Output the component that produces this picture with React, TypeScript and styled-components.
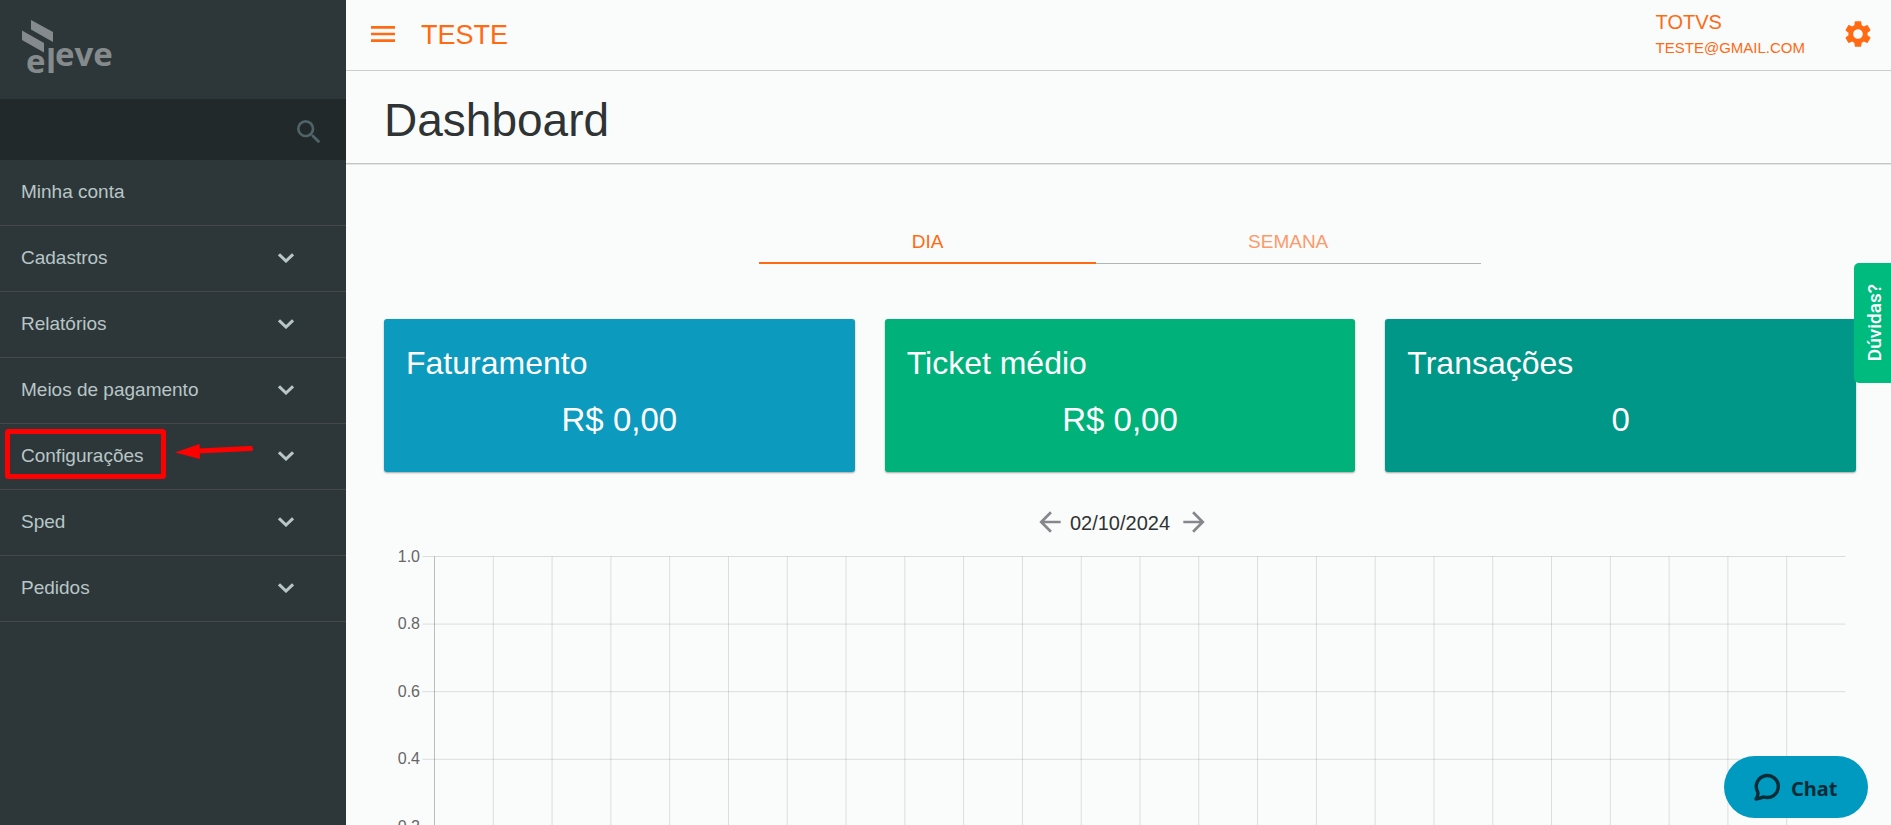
import React from "react";
import styled, { createGlobalStyle } from "styled-components";
import {
  MdArrowBack,
  MdArrowForward,
  MdMenu,
  MdSearch,
  MdSettings,
} from "react-icons/md";

const GlobalStyle = createGlobalStyle`
  *, *::before, *::after { box-sizing: border-box; }
  body {
    margin: 0;
    background: #fafcfc;
    color: #303333;
    font-family: "Liberation Sans", Arial, sans-serif;
  }
  button { font: inherit; border: 0; background: none; padding: 0; cursor: pointer; }
  svg { display: block; }
`;

const Shell = styled.div`
  position: relative;
  display: flex;
  height: 100vh;
  overflow: hidden;
`;

const Sidebar = styled.aside`
  flex: 0 0 346px;
  background: #2d3739;
`;

const LogoArea = styled.div`
  height: 99px;
`;

const LogoText = styled.text`
  font: 700 33px "Open Sans", "Noto Sans", sans-serif;
`;

const SearchBar = styled.form`
  display: flex;
  align-items: center;
  height: 61px;
  padding: 5px 21px 0;
  background: #22292b;
`;

const SearchInput = styled.input`
  flex: 1;
  min-width: 0;
  border: 0;
  outline: 0;
  background: transparent;
  color: #b8c6c7;
  font: 19px "Liberation Sans", Arial, sans-serif;
`;

const SearchButton = styled.button`
  color: #4f6468;
`;

const MenuList = styled.ul`
  list-style: none;
  margin: 0;
  padding: 0;
`;

const MenuRow = styled.li`
  position: relative;
  border-bottom: 1px solid #454849;
`;

const MenuButton = styled.button`
  display: flex;
  align-items: center;
  justify-content: space-between;
  width: 100%;
  height: 65px;
  padding: 0 52px 1px 21px;
  color: #b8c6c7;
  font-size: 19px;
  line-height: 24px;
  text-align: left;
`;

const Highlight = styled.svg`
  position: absolute;
  left: 5px;
  top: 5px;
  pointer-events: none;
`;

const Main = styled.main`
  flex: 1;
  min-width: 0;
`;

const TopBar = styled.header`
  display: flex;
  align-items: center;
  height: 71px;
  padding: 0 17px 0 21px;
  border-bottom: 1px solid #cccece;
  color: #ff6a13;
`;

const IconButton = styled.button`
  color: inherit;
  padding-bottom: 2px;
`;

const Company = styled.span`
  flex: 1;
  margin-left: 22px;
  padding-bottom: 1px;
  font-size: 27px;
  line-height: 32px;
`;

const User = styled.div`
  display: flex;
  flex-direction: column;
  margin-right: 37px;
`;

const UserName = styled.span`
  font-size: 20px;
  line-height: 25px;
`;

const UserMail = styled.span`
  font-size: 15px;
  line-height: 25px;
`;

const TitleBar = styled.div`
  padding: 23px 38px 17px;
  border-bottom: 1px solid #c4c6c6;
  box-shadow: 0 1px 0 #e4e6e6;
`;

const Title = styled.h1`
  margin: 0;
  font-size: 46px;
  font-weight: 400;
  line-height: 52px;
`;

const Content = styled.div`
  padding: 67px 35px 0 38px;
`;

const Tabs = styled.div`
  display: flex;
  width: 49%;
  margin: 0 auto;
  line-height: 22px;
`;

const Tab = styled.button<{ $active?: boolean }>`
  flex: 1 1 auto;
  height: 33px;
  padding-bottom: ${(p) => (p.$active ? "9px" : "10px")};
  border-bottom: ${(p) => (p.$active ? "2px solid #ff6a13" : "1px solid #b0b6b6")};
  color: ${(p) => (p.$active ? "#ff6a13" : "#fb9a6a")};
  font-size: 19px;
`;

const Cards = styled.section`
  display: grid;
  grid-template-columns: repeat(3, 1fr);
  gap: 30px;
  margin-top: 55px;
`;

const Card = styled.article<{ $color: string }>`
  padding: 24px 22px 32px;
  border-radius: 3px;
  background: ${(p) => p.$color};
  box-shadow: 0 1px 2px rgba(0, 0, 0, 0.35);
  color: #fff;
`;

const CardTitle = styled.h2`
  margin: 0 0 17px;
  font-size: 32px;
  font-weight: 400;
  line-height: 40px;
`;

const CardValue = styled.p`
  margin: 0;
  font-size: 33px;
  line-height: 40px;
  text-align: center;
`;

const DateNav = styled.div`
  display: flex;
  align-items: center;
  justify-content: center;
  gap: 4px;
  height: 32px;
  margin-top: 34px;
  padding-left: 4px;
`;

const DateText = styled.time`
  padding: 3px 4px 0 0;
  font-size: 20px;
`;

const DateButton = styled.button`
  color: #86878b;
`;

const Plot = styled.svg`
  width: calc(100% - 61px);
  height: 338px;
  margin: 18px 11px 0 50px;
  overflow: visible;
`;

const AxisLabel = styled.text`
  fill: #666;
  font-size: 16px;
`;

const HelpTab = styled.button`
  position: absolute;
  right: 0;
  top: 263px;
  display: flex;
  align-items: center;
  justify-content: center;
  width: 37px;
  height: 120px;
  padding-left: 3px;
  border-radius: 5px 0 0 5px;
  background: #00bb7e;
  color: #fff;
`;

const HelpLabel = styled.span`
  writing-mode: vertical-rl;
  transform: rotate(180deg);
  font: 500 19px Roboto, sans-serif;
`;

const ChatButton = styled.button`
  position: absolute;
  right: 23px;
  bottom: 7px;
  display: flex;
  align-items: center;
  gap: 10px;
  width: 144px;
  height: 62px;
  padding-left: 29px;
  border-radius: 31px;
  background: #0099bf;
  color: #0b2c36;
`;

const ChatLabel = styled.span`
  font: 700 20px/28px "Noto Sans", "Open Sans", sans-serif;
  padding-top: 3px;
`;

const menu = [
  { label: "Minha conta", expandable: false },
  { label: "Cadastros", expandable: true },
  { label: "Relatórios", expandable: true },
  { label: "Meios de pagamento", expandable: true },
  { label: "Configurações", expandable: true, highlighted: true },
  { label: "Sped", expandable: true },
  { label: "Pedidos", expandable: true },
];

const cards = [
  { title: "Faturamento", value: "R$ 0,00", color: "#0c9abf" },
  { title: "Ticket médio", value: "R$ 0,00", color: "#00b27a" },
  { title: "Transações", value: "0", color: "#009688" },
];

const levels = ["1.0", "0.8", "0.6", "0.4", "0.2", "0.0"];
const HOURS = 24;

function Logo() {
  return (
    <svg width="130" height="99" fill="#858b8d" role="img" aria-label="eleve">
      <polygon points="31,20 53,32 53,42 31,29.5" />
      <polygon points="22,30.5 44,43 44,52.5 22,40" />
      <LogoText x="26" y="73">e</LogoText>
      <LogoText x="46" y="73">l</LogoText>
      <LogoText x="55" y="66">eve</LogoText>
    </svg>
  );
}

function Chevron() {
  return (
    <svg width="16" height="10" viewBox="0 0 16 10" fill="none" stroke="currentColor" strokeWidth="3" aria-hidden="true">
      <path d="M1 1.300L8 8L15 1.300" />
    </svg>
  );
}

function HighlightMark() {
  return (
    <Highlight width="250" height="50" aria-hidden="true">
      <rect x="2.5" y="2.5" width="156" height="45" rx="1" fill="none" stroke="#f00" strokeWidth="5" />
      <path d="M193 22L245.5 19.5" stroke="#f00" strokeWidth="5" strokeLinecap="round" />
      <polygon points="170,23.5 194.5,15 195,30" fill="#f00" />
    </Highlight>
  );
}

function Chart() {
  return (
    <Plot role="img" aria-label="Faturamento por hora">
      <g transform="translate(0.5 0.5)" stroke="#000" strokeOpacity="0.12">
        {levels.map((level, i) => (
          <line key={level} x1="-12" x2="100%" y1={`${i * 20}%`} y2={`${i * 20}%`} />
        ))}
        {Array.from({ length: HOURS }, (_, h) => (
          <line
            key={h}
            x1={`${(h / HOURS) * 100}%`}
            x2={`${(h / HOURS) * 100}%`}
            y1="0"
            y2="100%"
            strokeOpacity={h === 0 ? 0.25 : 0.12}
          />
        ))}
      </g>
      {levels.map((level, i) => (
        <AxisLabel key={level} x="-14" y={`${i * 20}%`} textAnchor="end" dominantBaseline="central">
          {level}
        </AxisLabel>
      ))}
    </Plot>
  );
}

export default function App() {
  return (
    <>
      <GlobalStyle />
      <Shell>
        <Sidebar>
          <LogoArea>
            <Logo />
          </LogoArea>
          <SearchBar role="search" onSubmit={(e) => e.preventDefault()}>
            <SearchInput type="text" aria-label="Pesquisar" />
            <SearchButton type="submit" aria-label="Pesquisar">
              <MdSearch size={32} />
            </SearchButton>
          </SearchBar>
          <MenuList>
            {menu.map((item) => (
              <MenuRow key={item.label}>
                <MenuButton type="button">
                  {item.label}
                  {item.expandable && <Chevron />}
                </MenuButton>
                {item.highlighted && <HighlightMark />}
              </MenuRow>
            ))}
          </MenuList>
        </Sidebar>

        <Main>
          <TopBar>
            <IconButton type="button" aria-label="Menu">
              <MdMenu size={32} />
            </IconButton>
            <Company>TESTE</Company>
            <User>
              <UserName>TOTVS</UserName>
              <UserMail>TESTE@GMAIL.COM</UserMail>
            </User>
            <IconButton type="button" aria-label="Ajustes">
              <MdSettings size={32} />
            </IconButton>
          </TopBar>

          <TitleBar>
            <Title>Dashboard</Title>
          </TitleBar>

          <Content>
            <Tabs role="tablist">
              <Tab type="button" role="tab" aria-selected="true" $active>
                DIA
              </Tab>
              <Tab type="button" role="tab" aria-selected="false">
                SEMANA
              </Tab>
            </Tabs>

            <Cards>
              {cards.map((card) => (
                <Card key={card.title} $color={card.color}>
                  <CardTitle>{card.title}</CardTitle>
                  <CardValue>{card.value}</CardValue>
                </Card>
              ))}
            </Cards>

            <DateNav>
              <DateButton type="button" aria-label="Dia anterior">
                <MdArrowBack size={32} />
              </DateButton>
              <DateText dateTime="2024-10-02">02/10/2024</DateText>
              <DateButton type="button" aria-label="Próximo dia">
                <MdArrowForward size={32} />
              </DateButton>
            </DateNav>

            <Chart />
          </Content>
        </Main>

        <HelpTab type="button">
          <HelpLabel>Dúvidas?</HelpLabel>
        </HelpTab>

        <ChatButton type="button">
          <svg width="28" height="30" viewBox="0 0 28 30" fill="none" stroke="currentColor" strokeWidth="3.4" strokeLinecap="round" strokeLinejoin="round" aria-hidden="true">
            <path d="M4.5 19.5A11 11 0 1 1 11 25C8.5 25.5 6 26.5 3 27C4.8 24.5 5.5 22 4.5 19.5Z" />
          </svg>
          <ChatLabel>Chat</ChatLabel>
        </ChatButton>
      </Shell>
    </>
  );
}
